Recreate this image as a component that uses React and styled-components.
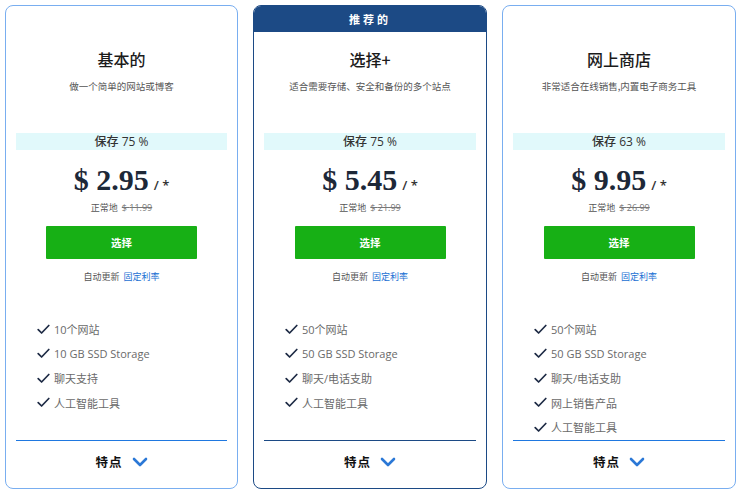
import React from "react";
import styled, { createGlobalStyle } from "styled-components";

const Global = createGlobalStyle`
  html, body { margin: 0; padding: 0; background: #ffffff; }
  body { font-family: "Open Sans", "Noto Sans CJK SC", sans-serif; color: #222; }
`;

const Page = styled.div`
  display: grid;
  grid-template-columns: 233px 234px 234px;
  gap: 15px;
  padding: 5px 0 0 5px;
`;

const Card = styled.div`
  box-sizing: border-box;
  height: 484px;
  border: 1px solid ${(p) => (p.$featured ? "#1c4a85" : "#79aef0")};
  border-radius: 8px;
  overflow: hidden;
  display: flex;
  flex-direction: column;
  background: #fff;
`;

const Ribbon = styled.div`
  height: 26px;
  flex: none;
  background: ${(p) => (p.$show ? "#1c4a85" : "transparent")};
  color: #fff;
  font-size: 11px;
  font-weight: 700;
  letter-spacing: 3px;
  line-height: 26px;
  text-align: center;
  font-family: "Noto Sans CJK SC", sans-serif;
`;

const Body = styled.div`
  flex: 1;
  display: flex;
  flex-direction: column;
  align-items: center;
  padding: 0 10px;
`;

const Title = styled.h2`
  margin: 17px 0 0;
  font-family: "Noto Sans CJK SC", sans-serif;
  font-size: 16px;
  font-weight: 500;
  line-height: 20px;
  color: #1b1b1b;
`;

const Subtitle = styled.p`
  margin: 11px 0 0;
  font-family: "Noto Sans CJK SC", sans-serif;
  font-size: 9.5px;
  line-height: 12px;
  color: #555;
`;

const SaveBand = styled.div`
  align-self: stretch;
  margin-top: 41px;
  height: 17px;
  line-height: 17px;
  background: #e1f9fb;
  text-align: center;
  font-size: 12px;
  font-weight: 500;
  color: #333;
`;

const PriceRow = styled.div`
  margin-top: 13px;
  height: 34px;
  display: flex;
  align-items: baseline;
  gap: 5px;
`;

const Price = styled.span`
  font-family: "Liberation Serif", serif;
  font-weight: 700;
  font-size: 30px;
  line-height: 34px;
  color: #1d2838;
`;

const Per = styled.span`
  font-size: 13px;
  color: #333;
  font-weight: 600;
`;

const Regular = styled.div`
  margin-top: 5px;
  font-size: 9px;
  line-height: 12px;
  color: #555;
  display: flex;
  gap: 4px;
`;

const Struck = styled.s`
  color: #777;
`;

const SelectButton = styled.button`
  margin-top: 12px;
  width: 151px;
  height: 33px;
  border: none;
  border-radius: 1px;
  background: #17b015;
  color: #fff;
  font-family: "Noto Sans CJK SC", sans-serif;
  font-size: 10.5px;
  font-weight: 700;
  cursor: pointer;
`;

const Renew = styled.div`
  margin-top: 12px;
  font-size: 9px;
  line-height: 12px;
  color: #555;
  display: flex;
  gap: 4px;
`;

const RenewLink = styled.span`
  color: #1a6fd3;
`;

const Features = styled.ul`
  align-self: stretch;
  list-style: none;
  margin: 34px 0 0;
  padding: 0 0 0 21px;
`;

const Feature = styled.li`
  height: 24.5px;
  display: flex;
  align-items: center;
  gap: 4px;
  font-size: 11px;
  color: #6a6a6a;
`;

const Divider = styled.div`
  margin-top: auto;
  align-self: stretch;
  flex: none;
  height: 1px;
  background: ${(p) => (p.$featured ? "#1c4a85" : "#1f78e0")};
`;

const Footer = styled.div`
  height: 47px;
  flex: none;
  display: flex;
  align-items: flex-start;
  justify-content: center;
  gap: 9px;
  padding-top: 10px;
  box-sizing: border-box;
`;

const FooterLabel = styled.span`
  font-family: "Noto Sans CJK SC", sans-serif;
  font-size: 12.5px;
  font-weight: 700;
  letter-spacing: 1px;
  line-height: 22px;
  color: #111;
`;

const Check = () => (
  <svg width="13" height="11" viewBox="0 0 13 11" fill="none">
    <path d="M1.2 5.6 L4.6 9 L11.8 1.5" stroke="#1e2b45" strokeWidth="1.7" strokeLinecap="round" strokeLinejoin="round" />
  </svg>
);

const Chevron = () => (
  <svg width="16" height="22" viewBox="0 0 16 22" fill="none">
    <path d="M2 8 L8 14 L14 8" stroke="#2b78d6" strokeWidth="2.6" strokeLinecap="round" strokeLinejoin="round" />
  </svg>
);

const plans = [
  {
    title: "基本的",
    sub: "做一个简单的网站或博客",
    save: "75",
    price: "2.95",
    regular: "11.99",
    features: ["10个网站", "10 GB SSD Storage", "聊天支持", "人工智能工具"],
  },
  {
    title: "选择+",
    sub: "适合需要存储、安全和备份的多个站点",
    save: "75",
    price: "5.45",
    regular: "21.99",
    featured: true,
    features: ["50个网站", "50 GB SSD Storage", "聊天/电话支助", "人工智能工具"],
  },
  {
    title: "网上商店",
    sub: "非常适合在线销售,内置电子商务工具",
    save: "63",
    price: "9.95",
    regular: "26.99",
    features: ["50个网站", "50 GB SSD Storage", "聊天/电话支助", "网上销售产品", "人工智能工具"],
  },
];

export default function App() {
  return (
    <>
      <Global />
      <Page>
        {plans.map((p) => (
          <Card key={p.title} $featured={p.featured}>
            <Ribbon $show={p.featured}>{p.featured ? "推荐的" : ""}</Ribbon>
            <Body>
              <Title>{p.title}</Title>
              <Subtitle>{p.sub}</Subtitle>
              <SaveBand>保存 {p.save} %</SaveBand>
              <PriceRow>
                <Price>$ {p.price}</Price>
                <Per>/ *</Per>
              </PriceRow>
              <Regular>
                <span>正常地</span>
                <Struck>$ {p.regular}</Struck>
              </Regular>
              <SelectButton>选择</SelectButton>
              <Renew>
                <span>自动更新</span>
                <RenewLink>固定利率</RenewLink>
              </Renew>
              <Features>
                {p.features.map((f) => (
                  <Feature key={f}>
                    <Check />
                    <span>{f}</span>
                  </Feature>
                ))}
              </Features>
              <Divider $featured={p.featured} />
              <Footer>
                <FooterLabel>特点</FooterLabel>
                <Chevron />
              </Footer>
            </Body>
          </Card>
        ))}
      </Page>
    </>
  );
}
